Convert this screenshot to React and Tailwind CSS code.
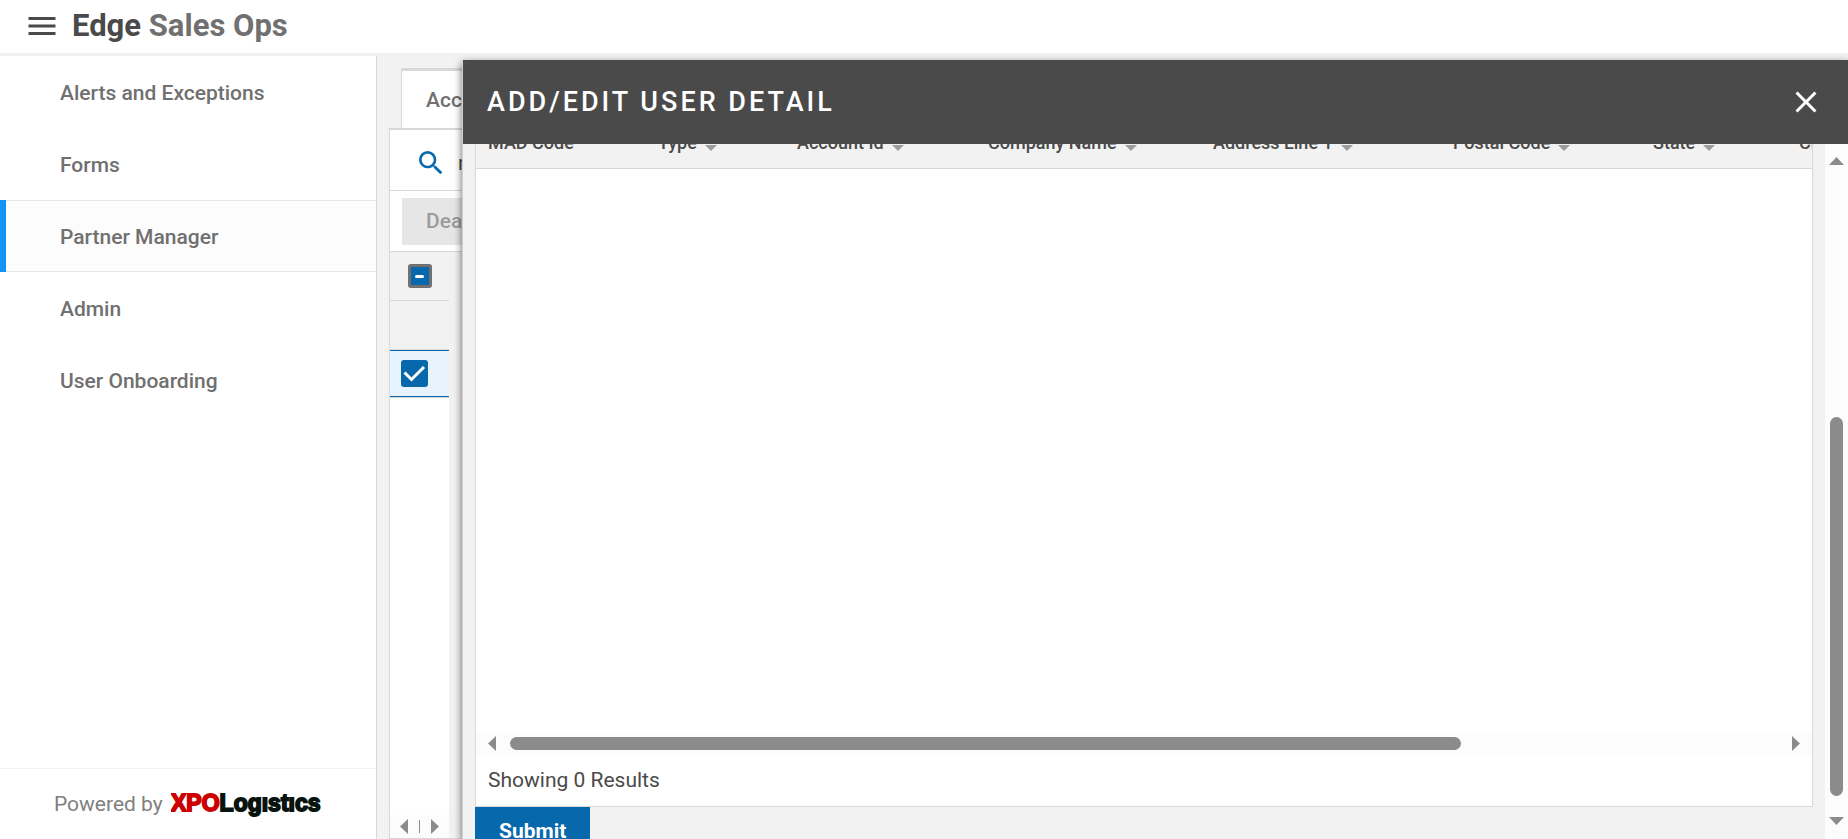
import React from "react";

const NAV = ["Alerts and Exceptions", "Forms", "Partner Manager", "Admin", "User Onboarding"];

const COLUMNS = [
  { label: "MAD Code", width: 170, sortable: false },
  { label: "Type", width: 139, sortable: true },
  { label: "Account Id", width: 191, sortable: true },
  { label: "Company Name", width: 225, sortable: true },
  { label: "Address Line 1", width: 240, sortable: true },
  { label: "Postal Code", width: 200, sortable: true },
  { label: "State", width: 146, sortable: true },
  { label: "City", width: 180, sortable: true },
];

function Arrow({ dir, className = "" }) {
  const shapes = {
    left: { w: 8, h: 15, d: "M8 0v15L0 7.5z" },
    right: { w: 8, h: 15, d: "M0 0v15l8-7.5z" },
    up: { w: 15, h: 8, d: "M0 8h15L7.5 0z" },
    down: { w: 15, h: 8, d: "M0 0h15L7.5 8z" },
  };
  const s = shapes[dir];
  return (
    <svg width={s.w} height={s.h} viewBox={`0 0 ${s.w} ${s.h}`} className={`shrink-0 ${className}`} aria-hidden="true">
      <path d={s.d} fill="#8b8b8b" />
    </svg>
  );
}

function Header() {
  return (
    <header className="flex h-14 shrink-0 items-center border-b-3 border-[#f2f2f2] bg-white pb-0.5 pl-6">
      <button type="button" aria-label="Menu" className="text-[#4a4a4a]">
        <svg width="36" height="36" viewBox="0 0 24 24" fill="currentColor" aria-hidden="true">
          <path d="M3 18h18v-2H3v2zm0-5h18v-2H3v2zm0-7v2h18V6H3z" />
        </svg>
      </button>
      <h1 className="pl-3 text-[31px] leading-9 font-bold text-[#707070]">
        <span className="text-[#4a4a4a]">Edge</span> Sales Ops
      </h1>
    </header>
  );
}

function Sidebar() {
  return (
    <aside className="flex w-[377px] shrink-0 flex-col border-r border-[#d8d8d8] bg-white">
      <nav className="flex flex-1 flex-col">
        {NAV.map((item) =>
          item === "Partner Manager" ? (
            <a key={item} href="#" aria-current="page" className="flex h-18 items-stretch bg-[#fcfcfc]">
              <span className="w-1.5 bg-[#1294f6]" />
              <span className="flex flex-1 items-center border-y border-[#e6e6e6] pt-0.5 pl-[54px]">{item}</span>
            </a>
          ) : (
            <a key={item} href="#" className="flex h-18 items-center pt-0.5 pl-[60px]">
              {item}
            </a>
          )
        )}
      </nav>
      <footer className="flex h-[71px] items-center gap-2 border-t border-[#f2f2f2] pl-[54px] font-normal text-[#808080]">
        <span>Powered by</span>
        <svg width="156" height="28" viewBox="0 0 156 28">
          <text x="0" y="21" fontFamily="Liberation Sans, Arial, sans-serif" fontWeight="700" fontSize="23" strokeWidth="1.8">
            <tspan fill="#cc0000" stroke="#cc0000">XPO</tspan>
            <tspan fill="#07130d" stroke="#07130d">Logıstıcs</tspan>
          </text>
        </svg>
      </footer>
    </aside>
  );
}

function AccountsPanel() {
  return (
    <main className="flex min-w-0 flex-1 flex-col bg-[#f2f2f2] pt-3 pl-3">
      <div className="flex pl-3">
        <button type="button" className="h-15 border-t-3 border-l border-[#d8d8d8] bg-white px-6 font-medium">
          Accounts
        </button>
      </div>
      <section className="flex flex-1 flex-col border-t-2 border-b border-l border-[#d8d8d8]">
        <div className="flex h-[61px] items-center border-b border-[#d8d8d8] bg-white pt-1.5 pl-[25px]">
          <svg width="32" height="32" viewBox="0 0 24 24" fill="#0868ac" aria-hidden="true">
            <path d="M15.5 14h-.79l-.28-.27A6.471 6.471 0 0 0 16 9.5 6.5 6.5 0 1 0 9.5 16c1.61 0 3.09-.59 4.23-1.57l.27.28v.79l5 4.99L20.49 19l-4.99-5zm-6 0C7.01 14 5 11.99 5 9.5S7.01 5 9.5 5 14 7.01 14 9.5 11.99 14 9.5 14z" />
          </svg>
          <input aria-label="Search accounts" defaultValue="n" className="ml-[11px] flex-1 font-normal text-[#4a4a4a] outline-none" />
        </div>
        <div className="flex h-[61px] items-center border-b border-[#d8d8d8] bg-white pl-3">
          <button type="button" disabled className="h-[47px] bg-[#e6e6e6] px-6 font-medium text-[#9b9b9b]">
            Deactivate
          </button>
        </div>
        <div className="flex w-[59px] flex-1 flex-col bg-white">
          <div className="flex h-[49px] items-center border-b border-[#d8d8d8] bg-[#f2f2f2] pl-[18px]">
            <label className="relative flex">
              <input type="checkbox" aria-label="Select all" className="size-6 appearance-none rounded-[3px] border-3 border-[#707070] bg-[#0868ac]" />
              <span className="absolute top-[11px] left-[7px] h-[3px] w-[9px] rounded-sm bg-white" />
            </label>
          </div>
          <div className="h-[49px] border-b border-[#d8d8d8] bg-[#f2f2f2]" />
          <div className="border-b border-[#d8d8d8]">
            <div className="flex h-[47px] items-center border-y border-[#0868ac] bg-[#e7f3fd] pl-[11px]">
              <label className="relative flex">
                <input type="checkbox" defaultChecked aria-label="Select row" className="size-[27px] appearance-none rounded-[3px] bg-[#0868ac]" />
                <svg width="27" height="27" viewBox="0 0 27 27" fill="none" stroke="#fff" strokeWidth="3" className="absolute inset-0" aria-hidden="true">
                  <path d="M3.5 12.5L10.5 19.5L23 7" />
                </svg>
              </label>
            </div>
          </div>
          <div className="flex-1" />
          <div className="flex h-[23px] items-center justify-center gap-[11px] bg-[#fcfcfc]">
            <Arrow dir="left" />
            <span className="h-[13px] w-px bg-[#8b8b8b]" />
            <Arrow dir="right" />
          </div>
        </div>
      </section>
    </main>
  );
}

function UserDetailDialog() {
  return (
    <div
      role="dialog"
      aria-labelledby="dialog-title"
      className="fixed top-[60px] right-0 bottom-0 left-[462px] flex flex-col border-l border-[#d0d0d0] bg-[#f2f2f2] shadow-[0_3px_8px_rgba(0,0,0,0.6)]"
    >
      <div className="flex h-21 shrink-0 items-center justify-between bg-[#4a4a4a] px-6 text-white">
        <h2 id="dialog-title" className="text-[27px] leading-9 font-medium tracking-[3px]">
          ADD/EDIT USER DETAIL
        </h2>
        <button type="button" aria-label="Close">
          <svg width="36" height="36" viewBox="0 0 24 24" fill="currentColor" aria-hidden="true">
            <path d="M19 6.41L17.59 5 12 10.59 6.41 5 5 6.41 10.59 12 5 17.59 6.41 19 12 13.41 17.59 19 19 17.59 13.41 12z" />
          </svg>
        </button>
      </div>
      <div className="flex min-h-0 flex-1">
        <div className="flex min-w-0 flex-1 flex-col overflow-hidden px-3">
          <div className="-mt-6 flex min-h-0 flex-1 flex-col overflow-hidden border-x border-b border-[#d8d8d8] bg-white">
            <div className="flex-1 overflow-hidden">
              <div className="h-[49px] overflow-hidden border-b border-[#d8d8d8] bg-[#f2f2f2]">
                <table className="w-[1491px] table-fixed text-left text-lg leading-6 text-[#4a4a4a]">
                  <thead>
                    <tr className="h-12">
                      {COLUMNS.map((c) => (
                        <th key={c.label} style={{ width: c.width }} className="pb-0.5 pl-3 font-medium whitespace-nowrap">
                          <span className="flex items-center gap-2">
                            {c.label}
                            {c.sortable && (
                              <svg width="12" height="6" viewBox="0 0 12 6" className="mt-2.5" aria-hidden="true">
                                <path d="M0 0h12L6 6z" fill="#9b9b9b" />
                              </svg>
                            )}
                          </span>
                        </th>
                      ))}
                    </tr>
                  </thead>
                </table>
              </div>
            </div>
            <div className="flex h-[23px] shrink-0 items-center gap-3.5 bg-[#fcfcfc] px-3">
              <Arrow dir="left" />
              <div className="flex flex-1">
                <span className="h-[13px] w-[75%] rounded-full bg-[#8b8b8b]" />
              </div>
              <Arrow dir="right" />
            </div>
            <p className="h-[51px] shrink-0 pl-3 leading-[51px] font-normal text-[#4a4a4a]">Showing 0 Results</p>
          </div>
          <div className="h-8 shrink-0">
            <button type="button" className="h-12 bg-[#0868ac] px-6 font-bold text-white">
              Submit
            </button>
          </div>
        </div>
        <div className="flex w-[23px] flex-col items-center bg-[#fcfcfc] pt-[13px] pb-3.5">
          <Arrow dir="up" />
          <div className="flex w-[13px] flex-1 flex-col justify-end pb-[21px]">
            <span className="h-[60%] rounded-full bg-[#8b8b8b]" />
          </div>
          <Arrow dir="down" />
        </div>
      </div>
    </div>
  );
}

export default function App() {
  return (
    <div className="flex h-screen flex-col overflow-hidden bg-[#f2f2f2] font-[Roboto,sans-serif] text-[21px] leading-7 font-medium text-[#707070]">
      <Header />
      <div className="flex min-h-0 flex-1">
        <Sidebar />
        <AccountsPanel />
      </div>
      <UserDetailDialog />
    </div>
  );
}
